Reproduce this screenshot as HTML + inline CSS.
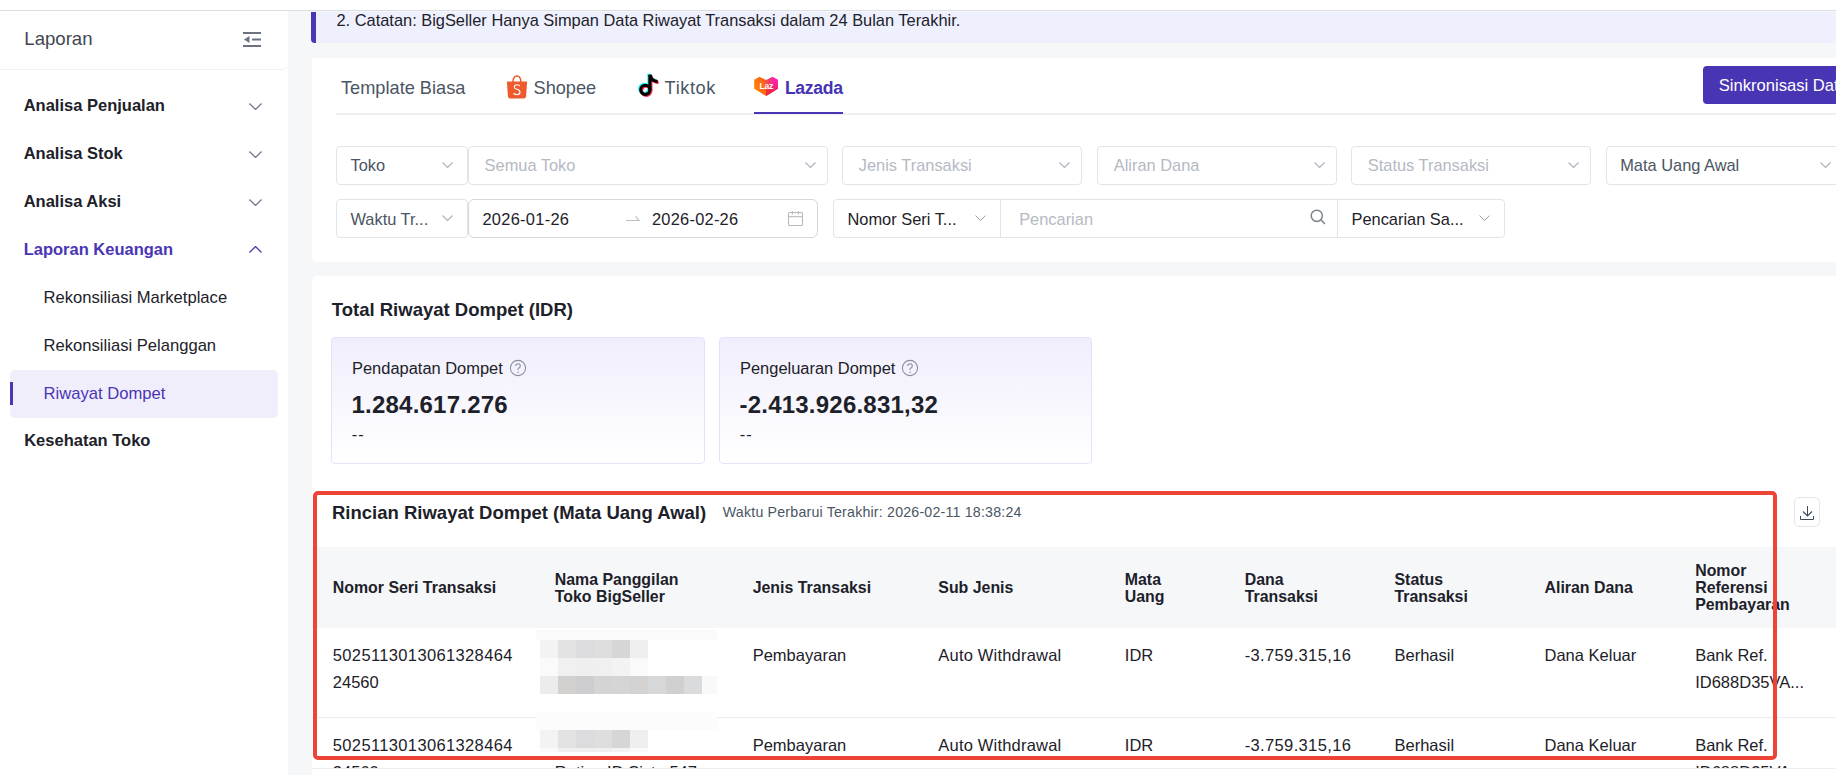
<!DOCTYPE html><html><head><meta charset="utf-8"><style>
*{box-sizing:border-box;margin:0;padding:0}
html,body{width:1836px;height:775px;overflow:hidden;background:#f6f7f9;font-family:"Liberation Sans",sans-serif;position:relative}
.t{position:absolute;white-space:nowrap}
</style></head><body>
<div style="position:absolute;left:0px;top:0px;width:1836px;height:10px;background:#fff"></div>
<div style="position:absolute;left:0px;top:10px;width:1836px;height:1px;background:#dcdde0"></div>
<div style="position:absolute;left:0px;top:11px;width:288px;height:764px;background:#fff"></div>
<div style="position:absolute;left:0px;top:11px;width:288px;height:59px;background:#fff;border-bottom:1px solid #eff0f3;border-bottom-right-radius:5px"></div>
<div class="t " style="left:24.3px;top:27.46px;font-size:18.6px;line-height:24px;color:#3f4652;font-weight:400;">Laporan</div>
<svg style="position:absolute;left:243px;top:31px" width="18" height="17" viewBox="0 0 18 17"><rect x="0" y="1" width="18" height="2" fill="#6b7380"/><rect x="9" y="7.5" width="9" height="2" fill="#6b7380"/><rect x="0" y="14" width="18" height="2" fill="#6b7380"/><polygon points="1,8.5 6.5,5 6.5,12" fill="#6b7380"/></svg>
<div class="t " style="left:23.7px;top:93.28px;font-size:16.5px;line-height:24px;color:#1d2129;font-weight:700;">Analisa Penjualan</div>
<svg style="position:absolute;left:248.9px;top:103.00px" width="13" height="7" viewBox="0 0 13 7"><polyline points="0.5,0.5 6.5,6.5 12.5,0.5" fill="none" stroke="#6d7689" stroke-width="1.25"/></svg>
<div class="t " style="left:23.7px;top:141.28px;font-size:16.5px;line-height:24px;color:#1d2129;font-weight:700;">Analisa Stok</div>
<svg style="position:absolute;left:248.9px;top:151.00px" width="13" height="7" viewBox="0 0 13 7"><polyline points="0.5,0.5 6.5,6.5 12.5,0.5" fill="none" stroke="#6d7689" stroke-width="1.25"/></svg>
<div class="t " style="left:23.7px;top:189.28px;font-size:16.5px;line-height:24px;color:#1d2129;font-weight:700;">Analisa Aksi</div>
<svg style="position:absolute;left:248.9px;top:199.00px" width="13" height="7" viewBox="0 0 13 7"><polyline points="0.5,0.5 6.5,6.5 12.5,0.5" fill="none" stroke="#6d7689" stroke-width="1.25"/></svg>
<div class="t " style="left:23.7px;top:237.28px;font-size:16.5px;line-height:24px;color:#4a35b5;font-weight:700;">Laporan Keuangan</div>
<svg style="position:absolute;left:248.9px;top:246.10px" width="13" height="7" viewBox="0 0 13 7"><polyline points="0.5,6.5 6.5,0.5 12.5,6.5" fill="none" stroke="#4a35b5" stroke-width="1.25"/></svg>
<div style="position:absolute;left:10px;top:370px;width:268px;height:48px;background:#f1eefc;border-radius:5px"></div>
<div style="position:absolute;left:10px;top:382px;width:3px;height:23px;background:#4a35b5"></div>
<div class="t " style="left:43.6px;top:286.05px;font-size:16.6px;line-height:24px;color:#1d2129;font-weight:400;">Rekonsiliasi Marketplace</div>
<div class="t " style="left:43.6px;top:334.05px;font-size:16.6px;line-height:24px;color:#1d2129;font-weight:400;">Rekonsiliasi Pelanggan</div>
<div class="t " style="left:43.6px;top:381.55px;font-size:16.6px;line-height:24px;color:#4a35b5;font-weight:400;">Riwayat Dompet</div>
<div class="t " style="left:24.2px;top:428.28px;font-size:16.5px;line-height:24px;color:#1d2129;font-weight:700;">Kesehatan Toko</div>
<div style="position:absolute;left:311px;top:12px;width:1525px;height:31px;background:#eef0fd"></div>
<div style="position:absolute;left:311px;top:12px;width:5px;height:31px;background:#4a35b5;border-bottom-left-radius:4px"></div>
<div class="t " style="left:336.5px;top:8.32px;font-size:16.4px;line-height:24px;color:#1d2129;font-weight:400;">2. Catatan: BigSeller Hanya Simpan Data Riwayat Transaksi dalam 24 Bulan Terakhir.</div>
<div style="position:absolute;left:312px;top:58px;width:1524px;height:204px;background:#fff;border-bottom-left-radius:5px"></div>
<div style="position:absolute;left:336px;top:113px;width:1500px;height:2px;background:#eeeff2"></div>
<div class="t " style="left:341px;top:76.19px;font-size:18.2px;line-height:24px;color:#4b5563;font-weight:400;">Template Biasa</div>
<svg style="position:absolute;left:506px;top:74.7px" width="22" height="24" viewBox="0 0 22 24"><path d="M6.9 7 C6.9 3.4 8.6 1.1 10.9 1.1 C13.2 1.1 14.8 3.4 14.8 7" fill="none" stroke="#ee5a2c" stroke-width="1.5"/><path d="M0.9 6.6 H21.1 L20.1 21.6 Q19.9 23.4 18.1 23.4 H3.9 Q2.1 23.4 1.9 21.6 Z" fill="#ee5a2c"/><path d="M13.6 10.6 Q12.6 9.8 11 9.8 Q8.3 9.8 8.3 11.9 Q8.3 13.5 11 14.2 Q14 15 14 17.3 Q14 19.6 11 19.6 Q9.1 19.6 7.8 18.5" fill="none" stroke="#fff" stroke-width="1.1" stroke-linecap="round"/></svg>
<div class="t " style="left:533.5px;top:76.19px;font-size:18.2px;line-height:24px;color:#4b5563;font-weight:400;">Shopee</div>
<svg style="position:absolute;left:636px;top:73px" width="24" height="26" viewBox="0 0 24 26"><g transform="translate(-1,-1)" fill="none" stroke="#25f4ee" stroke-width="3.1"><circle cx="9.3" cy="16.8" r="4.6"/><path d="M13.9 16.8 V1.8"/><path d="M13.9 1.8 Q14.8 8 21.6 8.6"/></g><g transform="translate(1,1)" fill="none" stroke="#fe2c55" stroke-width="3.1"><circle cx="9.3" cy="16.8" r="4.6"/><path d="M13.9 16.8 V1.8"/><path d="M13.9 1.8 Q14.8 8 21.6 8.6"/></g><g transform="translate(0,0)" fill="none" stroke="#000" stroke-width="3.1"><circle cx="9.3" cy="16.8" r="4.6"/><path d="M13.9 16.8 V1.8"/><path d="M13.9 1.8 Q14.8 8 21.6 8.6"/></g></svg>
<div class="t " style="left:664.6px;top:76.19px;font-size:18.2px;line-height:24px;color:#4b5563;font-weight:400;letter-spacing:0.6px">Tiktok</div>
<svg style="position:absolute;left:754px;top:76px" width="25" height="21" viewBox="0 0 25 21"><defs><linearGradient id="lgb" x1="0" y1="0.3" x2="1" y2="0"><stop offset="0" stop-color="#ff7f00"/><stop offset="0.4" stop-color="#fb6220"/><stop offset="0.6" stop-color="#f43a6e"/><stop offset="1" stop-color="#ff14d8"/></linearGradient><linearGradient id="lgo" x1="0" y1="0" x2="0" y2="1"><stop offset="0" stop-color="#f00a50" stop-opacity="0"/><stop offset="1" stop-color="#f00a50" stop-opacity="0.9"/></linearGradient></defs><polygon points="0.2,3.8 5.5,0.8 12.1,4 18.5,0.8 24,3.8 24,12.8 12.1,20 0.2,12.8" fill="url(#lgb)"/><polygon points="12.1,7 24,5 24,12.8 12.1,20" fill="url(#lgo)"/><text x="12.3" y="13.3" text-anchor="middle" font-family="Liberation Sans" font-weight="700" font-size="8.6" fill="#fff" letter-spacing="-0.2">Laz</text></svg>
<div class="t " style="left:784.9px;top:76.30px;font-size:17.6px;line-height:24px;color:#4433b5;font-weight:700;letter-spacing:-0.3px">Lazada</div>
<div style="position:absolute;left:754px;top:112px;width:89px;height:2px;background:#4a35b5"></div>
<div style="position:absolute;left:1703px;top:66px;width:200px;height:38px;background:#4835b3;border-radius:4px"></div>
<div class="t " style="left:1718.7px;top:74.25px;font-size:16.6px;line-height:24px;color:#fff;font-weight:400;">Sinkronisasi Data</div>
<div style="position:absolute;left:336px;top:146px;width:132px;height:39px;background:#fff;border:1px solid #e3e4e9;border-radius:4px;"></div>
<div style="position:absolute;left:468px;top:146px;width:360px;height:39px;background:#fff;border:1px solid #e3e4e9;border-radius:4px;"></div>
<div class="t " style="left:350.5px;top:152.72px;font-size:16.4px;line-height:24px;color:#4b5563;font-weight:400;">Toko</div>
<svg style="position:absolute;left:442px;top:162.20px" width="11" height="6" viewBox="0 0 11 6"><polyline points="0.5,0.5 5.5,5.5 10.5,0.5" fill="none" stroke="#adb2bd" stroke-width="1.15"/></svg>
<div class="t " style="left:484.6px;top:152.72px;font-size:16.4px;line-height:24px;color:#b4b9c4;font-weight:400;">Semua Toko</div>
<svg style="position:absolute;left:804.5px;top:162.20px" width="11" height="6" viewBox="0 0 11 6"><polyline points="0.5,0.5 5.5,5.5 10.5,0.5" fill="none" stroke="#adb2bd" stroke-width="1.15"/></svg>
<div style="position:absolute;left:842px;top:146px;width:240px;height:39px;background:#fff;border:1px solid #e3e4e9;border-radius:4px;"></div>
<div class="t " style="left:858.8px;top:152.72px;font-size:16.4px;line-height:24px;color:#b4b9c4;font-weight:400;">Jenis Transaksi</div>
<svg style="position:absolute;left:1059px;top:162.20px" width="11" height="6" viewBox="0 0 11 6"><polyline points="0.5,0.5 5.5,5.5 10.5,0.5" fill="none" stroke="#adb2bd" stroke-width="1.15"/></svg>
<div style="position:absolute;left:1097px;top:146px;width:240px;height:39px;background:#fff;border:1px solid #e3e4e9;border-radius:4px;"></div>
<div class="t " style="left:1113.8px;top:152.72px;font-size:16.4px;line-height:24px;color:#b4b9c4;font-weight:400;">Aliran Dana</div>
<svg style="position:absolute;left:1314px;top:162.20px" width="11" height="6" viewBox="0 0 11 6"><polyline points="0.5,0.5 5.5,5.5 10.5,0.5" fill="none" stroke="#adb2bd" stroke-width="1.15"/></svg>
<div style="position:absolute;left:1351px;top:146px;width:240px;height:39px;background:#fff;border:1px solid #e3e4e9;border-radius:4px;"></div>
<div class="t " style="left:1367.8px;top:152.72px;font-size:16.4px;line-height:24px;color:#b4b9c4;font-weight:400;">Status Transaksi</div>
<svg style="position:absolute;left:1568px;top:162.20px" width="11" height="6" viewBox="0 0 11 6"><polyline points="0.5,0.5 5.5,5.5 10.5,0.5" fill="none" stroke="#adb2bd" stroke-width="1.15"/></svg>
<div style="position:absolute;left:1606px;top:146px;width:240px;height:39px;background:#fff;border:1px solid #e3e4e9;border-radius:4px;"></div>
<div class="t " style="left:1620.2px;top:152.72px;font-size:16.4px;line-height:24px;color:#4b5563;font-weight:400;">Mata Uang Awal</div>
<svg style="position:absolute;left:1819.5px;top:162.20px" width="11" height="6" viewBox="0 0 11 6"><polyline points="0.5,0.5 5.5,5.5 10.5,0.5" fill="none" stroke="#adb2bd" stroke-width="1.15"/></svg>
<div style="position:absolute;left:336px;top:199px;width:132px;height:39px;background:#fff;border:1px solid #e3e4e9;border-radius:4px;"></div>
<div class="t " style="left:350.5px;top:206.92px;font-size:16.4px;line-height:24px;color:#4b5563;font-weight:400;">Waktu Tr...</div>
<svg style="position:absolute;left:442px;top:215.00px" width="11" height="6" viewBox="0 0 11 6"><polyline points="0.5,0.5 5.5,5.5 10.5,0.5" fill="none" stroke="#adb2bd" stroke-width="1.15"/></svg>
<div style="position:absolute;left:468px;top:199px;width:350px;height:39px;background:#fff;border:1px solid #d6d7dc;border-radius:6px"></div>
<div class="t " style="left:482.4px;top:206.92px;font-size:16.4px;line-height:24px;color:#1d2129;font-weight:400;letter-spacing:0.3px">2026-01-26</div>
<svg style="position:absolute;left:625px;top:215px" width="15" height="7" viewBox="0 0 15 7"><polyline points="1,5.5 14,5.5 10.5,1.3" fill="none" stroke="#bdbdbd" stroke-width="1.1"/></svg>
<div class="t " style="left:652px;top:206.92px;font-size:16.4px;line-height:24px;color:#1d2129;font-weight:400;letter-spacing:0.25px">2026-02-26</div>
<svg style="position:absolute;left:787px;top:210px" width="17" height="17" viewBox="0 0 17 17"><rect x="1.5" y="2.5" width="14" height="13" rx="1" fill="none" stroke="#b8b8b8" stroke-width="1.1"/><line x1="1.5" y1="6.7" x2="15.5" y2="6.7" stroke="#b8b8b8" stroke-width="1.1"/><line x1="5.3" y1="1" x2="5.3" y2="4.5" stroke="#b8b8b8" stroke-width="1.1"/><line x1="11.4" y1="1" x2="11.4" y2="4.5" stroke="#b8b8b8" stroke-width="1.1"/></svg>
<div style="position:absolute;left:833px;top:199px;width:672px;height:39px;background:#fff;border:1px solid #e3e4e9;border-radius:4px"></div>
<div style="position:absolute;left:1000px;top:199px;width:1px;height:39px;background:#e3e4e9"></div>
<div style="position:absolute;left:1337px;top:199px;width:1px;height:39px;background:#e3e4e9"></div>
<div class="t " style="left:847.5px;top:206.92px;font-size:16.4px;line-height:24px;color:#1d2129;font-weight:400;">Nomor Seri T...</div>
<svg style="position:absolute;left:975px;top:215.20px" width="11" height="6" viewBox="0 0 11 6"><polyline points="0.5,0.5 5.5,5.5 10.5,0.5" fill="none" stroke="#a0a0a0" stroke-width="1"/></svg>
<div class="t " style="left:1019.2px;top:206.92px;font-size:16.4px;line-height:24px;color:#b4b9c4;font-weight:400;">Pencarian</div>
<svg style="position:absolute;left:1309px;top:208px" width="18" height="18" viewBox="0 0 18 18"><circle cx="7.8" cy="7.8" r="5.6" fill="none" stroke="#7a828f" stroke-width="1.5"/><line x1="11.8" y1="11.8" x2="15.5" y2="15.5" stroke="#7a828f" stroke-width="1.6" stroke-linecap="round"/></svg>
<div class="t " style="left:1351.5px;top:206.92px;font-size:16.4px;line-height:24px;color:#1d2129;font-weight:400;">Pencarian Sa...</div>
<svg style="position:absolute;left:1479px;top:215.20px" width="11" height="6" viewBox="0 0 11 6"><polyline points="0.5,0.5 5.5,5.5 10.5,0.5" fill="none" stroke="#a0a0a0" stroke-width="1"/></svg>
<div style="position:absolute;left:312px;top:276px;width:1524px;height:499px;background:#fff;border-top-left-radius:5px"></div>
<div class="t " style="left:331.8px;top:297.79px;font-size:18.5px;line-height:24px;color:#1d2129;font-weight:700;">Total Riwayat Dompet (IDR)</div>
<div style="position:absolute;left:331px;top:337px;width:374px;height:127px;border:1px solid #e4e2fa;border-radius:4px;background:linear-gradient(180deg,#f0eefc 0%,#ffffff 100%)"></div>
<div class="t " style="left:352px;top:355.60px;font-size:16.46px;line-height:24px;color:#1d2129;font-weight:400;">Pendapatan Dompet</div>
<svg style="position:absolute;left:508.9px;top:359.2px" width="18" height="18" viewBox="0 0 18 18"><circle cx="9" cy="9" r="7.6" fill="none" stroke="#8b909a" stroke-width="1.1"/><path d="M6.7 7.1 Q6.8 4.8 9 4.8 Q11.3 4.8 11.3 6.9 Q11.3 8.2 9.9 8.9 Q9 9.4 9 10.6 V11" fill="none" stroke="#8b909a" stroke-width="1.1"/><circle cx="9" cy="13.2" r="0.75" fill="#8b909a"/></svg>
<div class="t " style="left:351.5px;top:392.98px;font-size:24px;line-height:24px;color:#1d2129;font-weight:700;letter-spacing:0.22px">1.284.617.276</div>
<div class="t " style="left:351.8px;top:422.32px;font-size:16.4px;line-height:24px;color:#1d2129;font-weight:400;letter-spacing:0.9px">--</div>
<div style="position:absolute;left:719px;top:337px;width:373px;height:127px;border:1px solid #e4e2fa;border-radius:4px;background:linear-gradient(180deg,#f0eefc 0%,#ffffff 100%)"></div>
<div class="t " style="left:740px;top:355.60px;font-size:16.46px;line-height:24px;color:#1d2129;font-weight:400;">Pengeluaran Dompet</div>
<svg style="position:absolute;left:900.6px;top:359.2px" width="18" height="18" viewBox="0 0 18 18"><circle cx="9" cy="9" r="7.6" fill="none" stroke="#8b909a" stroke-width="1.1"/><path d="M6.7 7.1 Q6.8 4.8 9 4.8 Q11.3 4.8 11.3 6.9 Q11.3 8.2 9.9 8.9 Q9 9.4 9 10.6 V11" fill="none" stroke="#8b909a" stroke-width="1.1"/><circle cx="9" cy="13.2" r="0.75" fill="#8b909a"/></svg>
<div class="t " style="left:739.5px;top:392.98px;font-size:24px;line-height:24px;color:#1d2129;font-weight:700;letter-spacing:0.22px">-2.413.926.831,32</div>
<div class="t " style="left:739.8px;top:422.32px;font-size:16.4px;line-height:24px;color:#1d2129;font-weight:400;letter-spacing:0.9px">--</div>
<div class="t " style="left:332px;top:501.09px;font-size:18.5px;line-height:24px;color:#1d2129;font-weight:700;">Rincian Riwayat Dompet (Mata Uang Awal)</div>
<div class="t " style="left:722.8px;top:500.08px;font-size:14.2px;line-height:24px;color:#4b5563;font-weight:400;letter-spacing:0.2px">Waktu Perbarui Terakhir: 2026-02-11 18:38:24</div>
<div style="position:absolute;left:1794px;top:497px;width:26px;height:30px;border:1px solid #e5e6eb;border-radius:5px;background:#fff"></div>
<svg style="position:absolute;left:1798px;top:503px" width="18" height="18" viewBox="0 0 18 18"><line x1="9.5" y1="3" x2="9.5" y2="12.5" stroke="#3d4a5c" stroke-width="1"/><polyline points="5,8.5 9.5,13 14,8.5" fill="none" stroke="#3d4a5c" stroke-width="1.1"/><polyline points="2.5,13 2.5,16.5 15.5,16.5 15.5,13" fill="none" stroke="#3d4a5c" stroke-width="1"/></svg>
<div style="position:absolute;left:312px;top:547px;width:1524px;height:81px;background:#f6f7f9"></div>
<div class="t " style="left:332.8px;top:576.29px;font-size:15.9px;line-height:24px;color:#1d2129;font-weight:700;">Nomor Seri Transaksi</div>
<div class="t " style="left:554.8px;top:568.49px;font-size:15.9px;line-height:24px;color:#1d2129;font-weight:700;">Nama Panggilan</div>
<div class="t " style="left:554.8px;top:585.49px;font-size:15.9px;line-height:24px;color:#1d2129;font-weight:700;">Toko BigSeller</div>
<div class="t " style="left:752.7px;top:576.29px;font-size:15.9px;line-height:24px;color:#1d2129;font-weight:700;">Jenis Transaksi</div>
<div class="t " style="left:938.3px;top:576.29px;font-size:15.9px;line-height:24px;color:#1d2129;font-weight:700;">Sub Jenis</div>
<div class="t " style="left:1124.8px;top:568.49px;font-size:15.9px;line-height:24px;color:#1d2129;font-weight:700;">Mata</div>
<div class="t " style="left:1124.8px;top:585.49px;font-size:15.9px;line-height:24px;color:#1d2129;font-weight:700;">Uang</div>
<div class="t " style="left:1244.7px;top:568.49px;font-size:15.9px;line-height:24px;color:#1d2129;font-weight:700;">Dana</div>
<div class="t " style="left:1244.7px;top:585.49px;font-size:15.9px;line-height:24px;color:#1d2129;font-weight:700;">Transaksi</div>
<div class="t " style="left:1394.5px;top:568.49px;font-size:15.9px;line-height:24px;color:#1d2129;font-weight:700;">Status</div>
<div class="t " style="left:1394.5px;top:585.49px;font-size:15.9px;line-height:24px;color:#1d2129;font-weight:700;">Transaksi</div>
<div class="t " style="left:1544.5px;top:576.29px;font-size:15.9px;line-height:24px;color:#1d2129;font-weight:700;">Aliran Dana</div>
<div class="t " style="left:1695.2px;top:559.29px;font-size:15.9px;line-height:24px;color:#1d2129;font-weight:700;">Nomor</div>
<div class="t " style="left:1695.2px;top:576.09px;font-size:15.9px;line-height:24px;color:#1d2129;font-weight:700;">Referensi</div>
<div class="t " style="left:1695.2px;top:592.89px;font-size:15.9px;line-height:24px;color:#1d2129;font-weight:700;">Pembayaran</div>
<div style="position:absolute;left:312px;top:628px;width:1524px;height:140px;overflow:hidden">
<div style="position:absolute;left:0px;top:89px;width:1524px;height:1px;background:#ebedf0"></div>
<div class="t " style="left:20.80000000000001px;top:15.28px;font-size:16.5px;line-height:24px;color:#1d2129;font-weight:400;letter-spacing:0.36px">5025113013061328464</div>
<div class="t " style="left:20.80000000000001px;top:41.98px;font-size:16.5px;line-height:24px;color:#1d2129;font-weight:400;letter-spacing:0px">24560</div>
<div class="t " style="left:440.70000000000005px;top:15.28px;font-size:16.5px;line-height:24px;color:#1d2129;font-weight:400;letter-spacing:0px">Pembayaran</div>
<div class="t " style="left:626.3px;top:15.28px;font-size:16.5px;line-height:24px;color:#1d2129;font-weight:400;letter-spacing:0.2px">Auto Withdrawal</div>
<div class="t " style="left:812.8px;top:15.28px;font-size:16.5px;line-height:24px;color:#1d2129;font-weight:400;letter-spacing:0px">IDR</div>
<div class="t " style="left:932.7px;top:15.28px;font-size:16.5px;line-height:24px;color:#1d2129;font-weight:400;letter-spacing:0.36px">-3.759.315,16</div>
<div class="t " style="left:1082.5px;top:15.28px;font-size:16.5px;line-height:24px;color:#1d2129;font-weight:400;letter-spacing:0px">Berhasil</div>
<div class="t " style="left:1232.5px;top:15.28px;font-size:16.5px;line-height:24px;color:#1d2129;font-weight:400;letter-spacing:0px">Dana Keluar</div>
<div class="t " style="left:1383.2px;top:15.28px;font-size:16.5px;line-height:24px;color:#1d2129;font-weight:400;letter-spacing:0px">Bank Ref.</div>
<div class="t " style="left:1383.2px;top:41.98px;font-size:16.5px;line-height:24px;color:#1d2129;font-weight:400;letter-spacing:0px">ID688D35VA...</div>
<div class="t " style="left:20.80000000000001px;top:104.98px;font-size:16.5px;line-height:24px;color:#1d2129;font-weight:400;letter-spacing:0.36px">5025113013061328464</div>
<div class="t " style="left:20.80000000000001px;top:131.68px;font-size:16.5px;line-height:24px;color:#1d2129;font-weight:400;letter-spacing:0px">24560</div>
<div class="t " style="left:440.70000000000005px;top:104.98px;font-size:16.5px;line-height:24px;color:#1d2129;font-weight:400;letter-spacing:0px">Pembayaran</div>
<div class="t " style="left:626.3px;top:104.98px;font-size:16.5px;line-height:24px;color:#1d2129;font-weight:400;letter-spacing:0.2px">Auto Withdrawal</div>
<div class="t " style="left:812.8px;top:104.98px;font-size:16.5px;line-height:24px;color:#1d2129;font-weight:400;letter-spacing:0px">IDR</div>
<div class="t " style="left:932.7px;top:104.98px;font-size:16.5px;line-height:24px;color:#1d2129;font-weight:400;letter-spacing:0.36px">-3.759.315,16</div>
<div class="t " style="left:1082.5px;top:104.98px;font-size:16.5px;line-height:24px;color:#1d2129;font-weight:400;letter-spacing:0px">Berhasil</div>
<div class="t " style="left:1232.5px;top:104.98px;font-size:16.5px;line-height:24px;color:#1d2129;font-weight:400;letter-spacing:0px">Dana Keluar</div>
<div class="t " style="left:1383.2px;top:104.98px;font-size:16.5px;line-height:24px;color:#1d2129;font-weight:400;letter-spacing:0px">Bank Ref.</div>
<div class="t " style="left:1383.2px;top:131.68px;font-size:16.5px;line-height:24px;color:#1d2129;font-weight:400;letter-spacing:0px">ID688D35VA...</div>
<div class="t " style="left:242.79999999999995px;top:131.68px;font-size:16.5px;line-height:24px;color:#1d2129;font-weight:400;letter-spacing:0px">Retiau ID Siste 547</div>
<div style="position:absolute;left:224px;top:2px;width:181px;height:10px;background:#fafafa"></div>
<div style="position:absolute;left:228px;top:12px;width:18px;height:18px;background:#f3f3f3"></div>
<div style="position:absolute;left:246px;top:12px;width:18px;height:18px;background:#e3e3e3"></div>
<div style="position:absolute;left:264px;top:12px;width:18px;height:18px;background:#dcdcde"></div>
<div style="position:absolute;left:282px;top:12px;width:18px;height:18px;background:#dedede"></div>
<div style="position:absolute;left:300px;top:12px;width:18px;height:18px;background:#d6d6d6"></div>
<div style="position:absolute;left:318px;top:12px;width:18px;height:18px;background:#efefef"></div>
<div style="position:absolute;left:228px;top:30px;width:18px;height:18px;background:#fafafa"></div>
<div style="position:absolute;left:246px;top:30px;width:18px;height:18px;background:#f0f0f0"></div>
<div style="position:absolute;left:264px;top:30px;width:18px;height:18px;background:#efefef"></div>
<div style="position:absolute;left:282px;top:30px;width:18px;height:18px;background:#f0f0f0"></div>
<div style="position:absolute;left:300px;top:30px;width:18px;height:18px;background:#f3f3f3"></div>
<div style="position:absolute;left:318px;top:30px;width:18px;height:18px;background:#fafafa"></div>
<div style="position:absolute;left:228px;top:48px;width:18px;height:18px;background:#ececec"></div>
<div style="position:absolute;left:246px;top:48px;width:18px;height:18px;background:#d2d1d0"></div>
<div style="position:absolute;left:264px;top:48px;width:18px;height:18px;background:#cdcdd0"></div>
<div style="position:absolute;left:282px;top:48px;width:18px;height:18px;background:#d4d4d4"></div>
<div style="position:absolute;left:300px;top:48px;width:18px;height:18px;background:#d5d5d5"></div>
<div style="position:absolute;left:318px;top:48px;width:18px;height:18px;background:#d3d2d0"></div>
<div style="position:absolute;left:336px;top:48px;width:18px;height:18px;background:#d6d7d8"></div>
<div style="position:absolute;left:354px;top:48px;width:18px;height:18px;background:#d0d0d0"></div>
<div style="position:absolute;left:372px;top:48px;width:18px;height:18px;background:#dadbdc"></div>
<div style="position:absolute;left:390px;top:48px;width:15px;height:18px;background:#f9f9f9"></div>
<div style="position:absolute;left:224px;top:84px;width:181px;height:18px;background:#fcfcfc"></div>
<div style="position:absolute;left:228px;top:102px;width:18px;height:18px;background:#f3f3f3"></div>
<div style="position:absolute;left:246px;top:102px;width:18px;height:18px;background:#e3e3e3"></div>
<div style="position:absolute;left:264px;top:102px;width:18px;height:18px;background:#dcdcde"></div>
<div style="position:absolute;left:282px;top:102px;width:18px;height:18px;background:#dedede"></div>
<div style="position:absolute;left:300px;top:102px;width:18px;height:18px;background:#d6d6d6"></div>
<div style="position:absolute;left:318px;top:102px;width:18px;height:18px;background:#efefef"></div>
<div style="position:absolute;left:228px;top:120px;width:18px;height:4px;background:#fafafa"></div>
<div style="position:absolute;left:246px;top:120px;width:18px;height:4px;background:#f0f0f0"></div>
<div style="position:absolute;left:264px;top:120px;width:18px;height:4px;background:#efefef"></div>
<div style="position:absolute;left:282px;top:120px;width:18px;height:4px;background:#f0f0f0"></div>
<div style="position:absolute;left:300px;top:120px;width:18px;height:4px;background:#f3f3f3"></div>
<div style="position:absolute;left:318px;top:120px;width:18px;height:4px;background:#fafafa"></div>
</div>
<div style="position:absolute;left:312px;top:768px;width:1524px;height:1px;background:#ebedf0"></div>
<div style="position:absolute;left:312px;top:769px;width:1524px;height:6px;background:#fff"></div>
<div style="position:absolute;left:313.4px;top:491.4px;width:1463.2px;height:269.1px;border:4px solid #ee4437;border-radius:5px"></div>
</body></html>
